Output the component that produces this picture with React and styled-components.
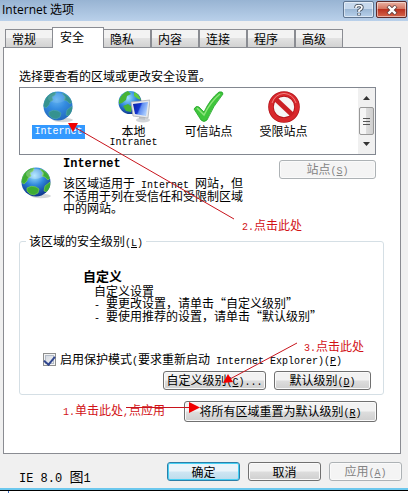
import React, { useState } from "react";
import styled, { createGlobalStyle, css } from "styled-components";

const tabs = ["常规", "安全", "隐私", "内容", "连接", "程序", "高级"];

// Icons
const Globe = ({ id, tint }) => (
  <svg width="32" height="32" viewBox="0 0 32 32" aria-hidden="true">
    <defs>
      <radialGradient id={id} cx="0.45" cy="0.28" r="0.75">
        <stop offset="0" stopColor={tint ? "#62b4f2" : "#9fe2ff"} />
        <stop offset="0.45" stopColor={tint ? "#338be0" : "#2f86dc"} />
        <stop offset="1" stopColor={tint ? "#2167bd" : "#0b2f86"} />
      </radialGradient>
      <clipPath id={`${id}-clip`}>
        <circle cx="15" cy="15" r="14.5" />
      </clipPath>
    </defs>
    <ellipse cx="20" cy="29" rx="10" ry="2.2" fill="#b9bdc0" opacity="0.6" />
    <circle cx="15" cy="15" r="14.5" fill={`url(#${id})`} />
    <g
      clipPath={`url(#${id}-clip)`}
      fill={tint ? "#35928f" : "#3dac35"}
      stroke={tint ? "#4fa9ac" : "#86d84a"}
      strokeWidth="0.6"
    >
      <path d="M1 11 Q3 5 8 2 L13 1 L12 4 L9 6 L10 9 L7 11 L6 14 L3 17 L0 15Z" />
      <path d="M19 2 Q26 4 29 11 L27 13 L24 10 L21 9 L22 6Z" />
      <path d="M6 21 Q10 18 15 20 L18 22 L17 26 L13 28 L9 27 L6 24Z" />
      <path d="M24 19 L29 15 L30 20 L26 25 L23 24Z" />
    </g>
    <ellipse cx="14" cy="7" rx="9" ry="5" fill="#fff" opacity={tint ? 0.1 : 0.25} />
  </svg>
);

const IntranetIcon = () => (
  <svg width="32" height="32" viewBox="0 0 32 32" aria-hidden="true">
    <defs>
      <radialGradient id="net" cx="0.4" cy="0.3" r="0.75">
        <stop offset="0" stopColor="#9fe2ff" />
        <stop offset="0.5" stopColor="#2f86dc" />
        <stop offset="1" stopColor="#0b2f86" />
      </radialGradient>
      <linearGradient id="screen" x1="0" y1="0" x2="1" y2="0.4">
        <stop offset="0" stopColor="#0a1fa0" />
        <stop offset="0.5" stopColor="#1436cf" />
        <stop offset="0.6" stopColor="#5f8df0" />
        <stop offset="1" stopColor="#a9ccff" />
      </linearGradient>
    </defs>
    <circle cx="12" cy="11.5" r="11.5" fill="url(#net)" />
    <path d="M1 9 Q4 2 10 0 L13 3 L9 5 L8 9 L4 12 L1 13Z" fill="#46b336" />
    <path d="M16 1 Q21 3 23 9 L20 8 L16 5Z" fill="#5fca3c" />
    <path d="M5 15 L10 13 L14 16 L13 21 L8 20Z" fill="#46b336" />
    <ellipse cx="25" cy="29" rx="7" ry="2.5" fill="#d2d5d8" />
    <path d="M21 24 L27 25 L27 29 L21 28Z" fill="#bfc3c8" />
    <path d="M13 11 L32 9 L30 27 L15 25Z" fill="#e6e8ea" stroke="#a4a8ad" strokeWidth="0.7" />
    <path d="M15 13 L30 11 L28 25 L17 23Z" fill="url(#screen)" />
  </svg>
);

const CheckIcon = () => (
  <svg width="32" height="32" viewBox="0 0 32 32" aria-hidden="true">
    <path
      d="M1 18 Q3 14 6 16 L11 21 Q17 8 26 1 Q30 0 30 3 Q20 15 14 29 Q11 32 8 29Z"
      fill="#3fc63c"
      stroke="#22a326"
      strokeWidth="0.8"
    />
    <path d="M4 17 L11 24 Q18 10 27 3" fill="none" stroke="#8fe57c" strokeWidth="1.5" />
  </svg>
);

const BlockedIcon = () => (
  <svg width="32" height="32" viewBox="0 0 32 32" aria-hidden="true">
    <circle cx="16" cy="16" r="13" fill="#f6f6f6" stroke="#b01118" strokeWidth="5.6" />
    <circle cx="16" cy="16" r="13" fill="none" stroke="#d8282c" strokeWidth="4.2" />
    <path d="M7.5 8 L24.5 24" stroke="#cb1f24" strokeWidth="5" />
    <path d="M4 12 Q7 3 16 2.4 Q25 3 28 12" fill="none" stroke="#f08080" strokeWidth="1" />
  </svg>
);

const zones = [
  { name: ["Internet"], icon: <Globe id="zone-globe" tint />, selected: true },
  { name: ["本地", "Intranet"], icon: <IntranetIcon /> },
  { name: ["可信站点"], icon: <CheckIcon /> },
  { name: ["受限站点"], icon: <BlockedIcon /> },
];

const Key = ({ children }) => (
  <Latin>
    (<u>{children}</u>)
  </Latin>
);

const App = () => {
  const [activeTab, setActiveTab] = useState("安全");
  const [protectedMode, setProtectedMode] = useState(true);

  return (
    <Dialog>
      <GlobalStyle />
      <TitleBar>
        <Title>Internet 选项</Title>
        <CaptionButton aria-label="帮助">
          <svg width="10" height="12" viewBox="0 0 10 12">
            <path d="M2 4 V3 Q2 1.5 5 1.5 Q8 1.5 8 3.5 Q8 5 5 6.5 V8 M5 9 V11.4" fill="none" stroke="#4b5563" strokeWidth="3.4" />
            <path d="M2 4 V3 Q2 1.5 5 1.5 Q8 1.5 8 3.5 Q8 5 5 6.5 V8 M5 9.2 V11" fill="none" stroke="#fff" strokeWidth="1.6" />
          </svg>
        </CaptionButton>
        <CaptionButton $close aria-label="关闭">
          <svg width="12" height="10" viewBox="0 0 12 10">
            <path d="M2 1 L10 9 M10 1 L2 9" stroke="#5b3a3a" strokeWidth="4" />
            <path d="M2.4 1.4 L9.6 8.6 M9.6 1.4 L2.4 8.6" stroke="#fff" strokeWidth="2.4" />
          </svg>
        </CaptionButton>
      </TitleBar>

      <TabList role="tablist">
        {tabs.map((tab) => (
          <Tab
            key={tab}
            role="tab"
            aria-selected={tab === activeTab}
            $active={tab === activeTab}
            onClick={() => setActiveTab(tab)}
          >
            {tab}
          </Tab>
        ))}
      </TabList>

      <Panel role="tabpanel">
        <Prompt>选择要查看的区域或更改安全设置。</Prompt>
        <ZoneList>
          {zones.map((zone) => (
            <Zone key={zone.name.join("")}>
              {zone.icon}
              <ZoneName $selected={zone.selected}>
                {zone.name.map((line) =>
                  /^[A-Z]/.test(line) ? (
                    <Latin key={line}>{line}</Latin>
                  ) : (
                    <span key={line}>{line}</span>
                  )
                )}
              </ZoneName>
            </Zone>
          ))}
          <ScrollBar>
            <svg width="7" height="4" viewBox="0 0 7 4">
              <path d="M0 4 L3.5 0 L7 4Z" fill="#333" />
            </svg>
            <Thumb>
              <i />
              <i />
              <i />
            </Thumb>
            <svg width="7" height="4" viewBox="0 0 7 4">
              <path d="M0 0 L3.5 4 L7 0Z" fill="#333" />
            </svg>
          </ScrollBar>
        </ZoneList>

        <ZoneDetails>
          <Globe id="detail-globe" />
          <ZoneText>
            <h2>
              <Latin>Internet</Latin>
            </h2>
            <p>
              该区域适用于<Latin> Internet </Latin>网站，但
              <br />
              不适用于列在受信任和受限制区域
              <br />
              中的网站。
            </p>
          </ZoneText>
          <SitesButton disabled>
            站点<Key>S</Key>
          </SitesButton>
        </ZoneDetails>

        <Level>
          <legend>
            该区域的安全级别<Key>L</Key>
          </legend>
          <LevelText>
            <h2>自定义</h2>
            <p>自定义设置</p>
            <p>
              <Latin>- </Latin>要更改设置，请单击“自定义级别”
            </p>
            <p>
              <Latin>- </Latin>要使用推荐的设置，请单击“默认级别”
            </p>
          </LevelText>
          <CheckLabel>
            <CheckBox
              type="checkbox"
              checked={protectedMode}
              onChange={(e) => setProtectedMode(e.target.checked)}
            />
            <span>
              启用保护模式<Latin>(</Latin>要求重新启动<Latin> Internet Explorer)</Latin>
              <Key>P</Key>
            </span>
          </CheckLabel>
          <LevelButtons>
            <Button>
              自定义级别<Key>C</Key>
              <Latin>...</Latin>
            </Button>
            <Button>
              默认级别<Key>D</Key>
            </Button>
          </LevelButtons>
        </Level>
        <ResetButton>
          将所有区域重置为默认级别<Key>R</Key>
        </ResetButton>
      </Panel>

      <Footer>
        <Version>
          <span>IE 8.0 </span>图<span>1</span>
        </Version>
        <Button $primary>确定</Button>
        <Button>取消</Button>
        <Button disabled>
          应用<Key>A</Key>
        </Button>
      </Footer>
      <BottomEdge />
      <Behind />

      {/* Numbered steps and arrows on top of the dialog */}
      <Arrows width="408" height="493" viewBox="0 0 408 493" aria-hidden="true">
        <g stroke="#c8141c" strokeWidth="1">
          <path d="M234 219 L76 128" />
          <path d="M126 407.5 H190" />
          <path d="M297 343 L230 379" />
        </g>
        <g fill="#f00000">
          <path d="M68 123 L78 123 L73 132Z" />
          <path d="M200 407.5 L189 402 V413Z" />
          <path d="M223 383 L228 374 L233 382Z" />
        </g>
      </Arrows>
      <Note $left={242} $top={218}>
        <Latin>2.</Latin>点击此处
      </Note>
      <Note $left={304} $top={339}>
        <Latin>3.</Latin>点击此处
      </Note>
      <Note $left={63} $top={403}>
        <Latin>1.</Latin>单击此处<Latin>,</Latin>点应用
      </Note>
    </Dialog>
  );
};

// Styles
const GlobalStyle = createGlobalStyle`
  * {
    box-sizing: border-box;
  }
  body {
    margin: 0;
    background: #fff;
  }
  h2, p {
    margin: 0;
  }
  button, input {
    font: inherit;
    margin: 0;
  }
`;

const Dialog = styled.main`
  position: relative;
  background: #f0f0f0;
  color: #000;
  font: 12px/12px "Noto Sans CJK SC", sans-serif;
  white-space: nowrap;
`;

const Latin = styled.span`
  font-family: "Liberation Mono", "Noto Sans CJK SC", monospace;
  font-size: 10px;
  line-height: 8px;
  white-space: pre;
`;

const TitleBar = styled.header`
  display: flex;
  align-items: flex-start;
  gap: 2px;
  height: 21px;
  padding: 1px 1px 0 2px;
  background: linear-gradient(#98b4d3, #b9d0ea);
`;

const Title = styled.h1`
  flex: 1;
  margin: 0;
  font: 12px/18px "Open Sans", "Noto Sans CJK SC", sans-serif;
`;

const CaptionButton = styled.button`
  display: flex;
  align-items: center;
  justify-content: center;
  width: 31px;
  height: 17px;
  padding: 0;
  border: 1px solid #5f7590;
  border-radius: 2px;
  box-shadow: inset 0 0 0 1px rgba(255, 255, 255, 0.5);
  background: linear-gradient(#c6d8ec 45%, #9cb8d6 50%, #b7d0ea);
  ${(props) =>
    props.$close &&
    css`
      border-color: #5c2a2a;
      background: linear-gradient(#e5a595 10%, #d57560 45%, #bb3220 50%, #d5664c);
    `}
`;

const TabList = styled.div`
  display: flex;
  align-items: flex-end;
  height: 26px;
  padding-left: 5px;
`;

const Tab = styled.button`
  width: 48px;
  height: 18px;
  padding: 0 0 0 6px;
  border: 1px solid #8a8c92;
  border-bottom: 0;
  background: linear-gradient(#f3f3f3 45%, #e2e2e2 50%, #d2d2d2);
  text-align: left;
  ${(props) =>
    props.$active &&
    css`
      width: 52px;
      height: 21px;
      margin: 0 -1px -1px;
      padding: 0 0 2px 7px;
      background: #fff;
      z-index: 1;
    `}
`;

const Panel = styled.section`
  margin: 0 7px 0 3px;
  height: 407px;
  padding: 21px 16px 0 15px;
  border: 1px solid #8a8c92;
  background: #fff;
`;

const Prompt = styled.p`
  line-height: 14px;
`;

const ZoneList = styled.div`
  display: flex;
  height: 68px;
  margin: 4px 8px 0 0;
  padding-left: 1px;
  border: 1px solid #828790;
`;

const Zone = styled.div`
  display: flex;
  flex-direction: column;
  align-items: center;
  width: 75px;
  padding-top: 3px;
`;

const ZoneName = styled.span`
  display: flex;
  flex-direction: column;
  align-items: center;
  margin-top: 2px;
  padding: 0 2px 1px;
  ${Latin} {
    line-height: 12px;
  }
  ${(props) =>
    props.$selected &&
    css`
      padding-top: 1px;
      background: #3399ff;
      color: #fff;
    `}
`;

const ScrollBar = styled.div`
  display: flex;
  flex-direction: column;
  align-items: center;
  justify-content: space-between;
  width: 17px;
  margin-left: auto;
  padding: 8px 0;
  background: #f0f0f0;
`;

const Thumb = styled.div`
  display: flex;
  flex-direction: column;
  align-items: center;
  justify-content: center;
  gap: 2px;
  width: 15px;
  height: 28px;
  border: 1px solid #979797;
  border-radius: 2px;
  background: linear-gradient(90deg, #f5f5f5 45%, #dcdcdc 50%, #cfcfcf);
  i {
    width: 7px;
    height: 1px;
    background: #555;
  }
`;

const ZoneDetails = styled.div`
  display: flex;
  align-items: flex-start;
  height: 80px;
  padding: 0 8px 0 2px;
  > svg {
    margin-top: 12px;
  }
`;

const ZoneText = styled.div`
  flex: 1;
  margin-left: 10px;
  padding-top: 1px;
  h2 {
    margin-bottom: 9px;
    font-size: 12px;
  }
  h2 span {
    font-size: 12px;
  }
`;

const Button = styled.button`
  height: 19px;
  padding: 0;
  border: 1px solid #707070;
  border-radius: 3px;
  box-shadow: inset 0 0 0 1px #fafafa;
  background: linear-gradient(#f2f2f2 48%, #dddddd 52%, #cfcfcf);
  color: #000;
  ${(props) =>
    props.$primary &&
    css`
      border-color: #2c7fa8;
      box-shadow: inset 0 0 0 1px #46d0f4;
      background: linear-gradient(#eaf4fa 48%, #cfe6f3 52%, #bcdcec);
    `}
  &:disabled {
    border-color: #adb2b5;
    background: #f4f4f4;
    color: #838383;
  }
`;

const SitesButton = styled(Button)`
  width: 97px;
  margin-top: 5px;
`;

const Level = styled.fieldset`
  display: flex;
  flex-direction: column;
  height: 160px;
  margin: 0;
  padding: 21px 12px 0 23px;
  border: 1px solid #d5dfe5;
  border-radius: 3px;
  legend {
    margin-left: -17px;
    padding: 0 3px;
  }
`;

const LevelText = styled.div`
  margin-left: 40px;
  h2 {
    margin-bottom: 2px;
    font-size: 13px;
    line-height: 14px;
  }
  p {
    margin-left: 11px;
  }
`;

const CheckLabel = styled.label`
  display: flex;
  align-items: center;
  gap: 4px;
  margin-top: 30px;
`;

const CheckBox = styled.input`
  display: flex;
  justify-content: center;
  width: 13px;
  height: 13px;
  border: 1px solid #8e8f8f;
  box-shadow: inset 0 0 0 1px #f4f4f4, inset 0 0 0 2px #b4bcc8;
  background: linear-gradient(135deg, #cfd5de, #f6f6f6);
  appearance: none;
  &:checked::after {
    content: "";
    width: 5px;
    height: 9px;
    border: solid #31478f;
    border-width: 0 2px 2px 0;
    transform: rotate(40deg);
  }
`;

const LevelButtons = styled.div`
  display: flex;
  justify-content: flex-end;
  gap: 8px;
  margin-top: 5px;
  button {
    width: 97px;
  }
  button:first-child {
    width: 103px;
  }
`;

const ResetButton = styled(Button)`
  display: block;
  width: 193px;
  height: 21px;
  margin: 6px 7px 0 auto;
`;

const Footer = styled.footer`
  display: flex;
  gap: 8px;
  height: 34px;
  padding: 8px 6px 0 19px;
  button {
    width: 73px;
  }
`;

const Version = styled.span`
  flex: 1;
  font: 14px/28px "Noto Sans CJK SC", sans-serif;
  span {
    font: 12px "Liberation Mono", monospace;
    white-space: pre;
  }
`;

const BottomEdge = styled.div`
  height: 3px;
  border-top: 2px solid #6cc8ee;
  border-bottom: 1px solid #000;
`;

// Sliver of the window underneath
const Behind = styled.div`
  height: 2px;
  margin-left: 8px;
  border-left: 1px solid #3f6fc4;
  box-shadow: -8px 0 #fff;
  background: #fff;
`;

const Arrows = styled.svg`
  position: absolute;
  top: 0;
  left: 0;
  z-index: 2;
  pointer-events: none;
`;

const Note = styled.span`
  position: absolute;
  top: ${(props) => props.$top}px;
  left: ${(props) => props.$left}px;
  z-index: 2;
  color: #d21217;
  line-height: 14px;
`;

export default App;
